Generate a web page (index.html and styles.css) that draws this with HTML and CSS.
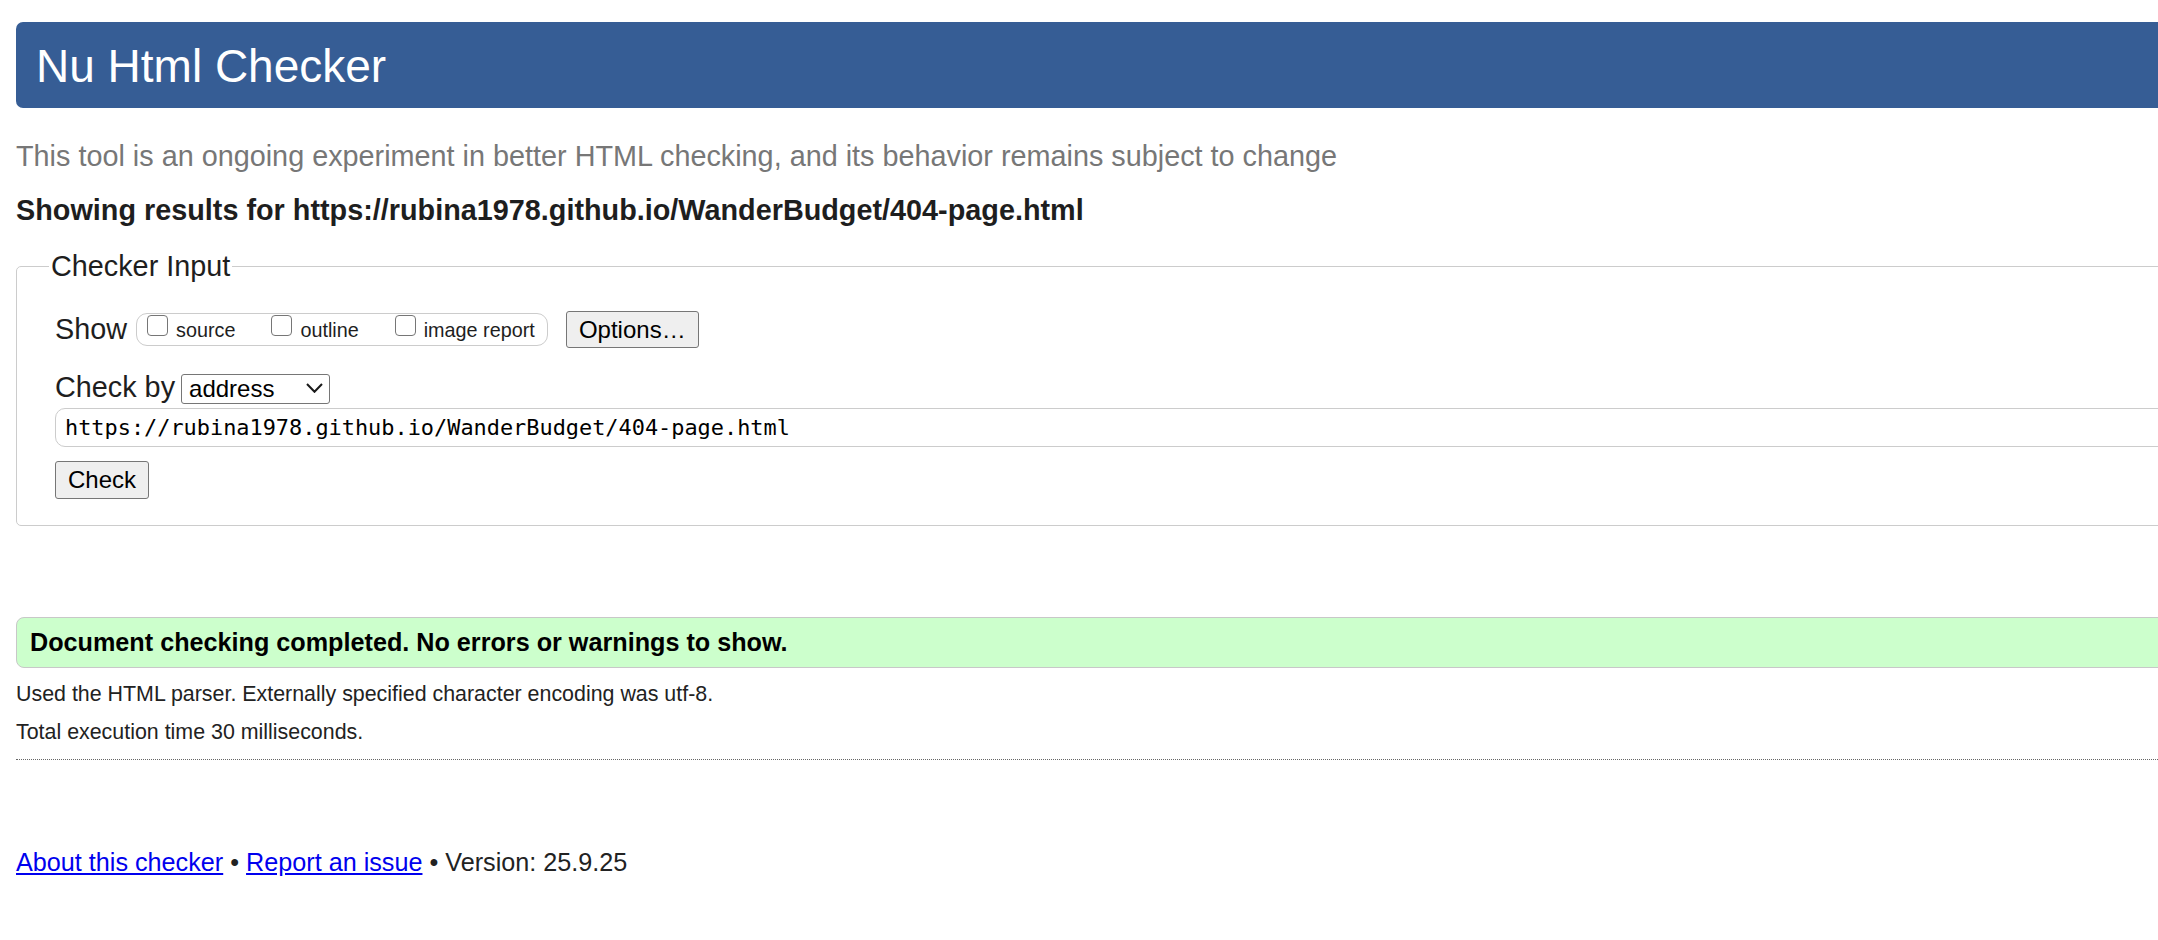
FILE: index.html
```html
<!DOCTYPE html>
<html lang="en">
<head>
<meta charset="utf-8">
<title>Nu Html Checker</title>
<link rel="stylesheet" href="styles.css">
</head>
<body>
<div class="page">
  <header class="banner"><h1 class="banner-title">Nu Html Checker</h1></header>
  <p class="tagline">This tool is an ongoing experiment in better HTML checking, and its behavior remains subject to change</p>
  <h2 class="results-for">Showing results for https://rubina1978.github.io/WanderBudget/404-page.html</h2>
  <form class="checker-form">
    <fieldset class="checker-input">
      <legend class="checker-legend">Checker Input</legend>
      <div class="show-row">
        <span class="row-label">Show</span>
        <span class="opts">
          <label class="opt"><input class="opt-box" type="checkbox"><span class="opt-text">source</span></label>
          <label class="opt"><input class="opt-box" type="checkbox"><span class="opt-text">outline</span></label>
          <label class="opt"><input class="opt-box" type="checkbox"><span class="opt-text">image report</span></label>
        </span>
        <button type="button" class="btn btn-options">Options…</button>
      </div>
      <div class="by-row">
        <span class="row-label">Check by</span>
        <span class="select-wrap">
          <select class="by-select"><option>address</option></select>
          <svg class="chev" width="17" height="10" viewBox="0 0 17 10"><path d="M1 1 L8.5 8.8 L16 1" fill="none" stroke="#1a1a1a" stroke-width="2"/></svg>
        </span>
      </div>
      <input class="url" type="text" value="https://rubina1978.github.io/WanderBudget/404-page.html">
      <button type="button" class="btn btn-check">Check</button>
    </fieldset>
  </form>
  <p class="success">Document checking completed. No errors or warnings to show.</p>
  <p class="meta meta-first">Used the HTML parser. Externally specified character encoding was utf-8.</p>
  <p class="meta meta-second">Total execution time 30 milliseconds.</p>
  <hr class="sep">
  <p class="footer"><a class="footer-link" href="#">About this checker</a> • <a class="footer-link" href="#">Report an issue</a> • Version: 25.9.25</p>
</div>
</body>
</html>
```
FILE: styles.css
```css
html {
  overflow: hidden;
}
body {
  margin: 0;
  background: #fff;
  color: #222;
  font-family: "Liberation Sans", Arial, sans-serif;
}
.page {
  width: 2200px;
  padding: 22px 0 0 16px;
}
.banner {
  height: 86px;
  background: #365d95;
  border-radius: 7px;
  padding-left: 20px;
}
.banner-title {
  margin: 0;
  font-size: 46px;
  font-weight: normal;
  line-height: 88px;
  color: #fff;
}
.tagline {
  margin: 32px 0 0;
  font-size: 28.8px;
  color: #777;
}
.results-for {
  margin: 21px 0 0;
  font-size: 28.8px;
  font-weight: bold;
  color: #1e1e1e;
}
.checker-form {
  margin: 23px 0 0;
}
.checker-input {
  margin: 0;
  border: 1px solid #ccc;
  border-radius: 5px;
  padding: 0 0 26px 38px;
  min-width: 0;
}
.checker-legend {
  font-size: 28.8px;
  padding: 0 2px;
  margin-left: -6px;
  color: #1e1e1e;
}
.show-row {
  display: flex;
  align-items: center;
  margin-top: 28px;
  height: 37px;
}
.row-label {
  font-size: 28.8px;
  color: #1e1e1e;
}
.opts {
  display: flex;
  align-items: flex-start;
  gap: 36px;
  height: 31px;
  margin-left: 9px;
  padding: 0 12px 0 10px;
  border: 1px solid #ccc;
  border-radius: 11px;
}
.opt {
  display: flex;
  align-items: flex-start;
  font-size: 19.8px;
  color: #1e1e1e;
}
.opt-box {
  appearance: none;
  -webkit-appearance: none;
  width: 21px;
  height: 21px;
  margin: 1px 0 0;
  border: 1.6px solid #767676;
  border-radius: 4px;
  background: #fff;
}
.opt-text {
  margin-left: 8px;
  padding-top: 5px;
}
.btn {
  font-family: "Liberation Sans", Arial, sans-serif;
  font-size: 24px;
  color: #000;
  background: #efefef;
  border: 1px solid #767676;
  border-radius: 3px;
  padding: 0;
}
.btn-options {
  width: 133px;
  height: 37px;
  margin-left: 18px;
}
.by-row {
  display: flex;
  align-items: baseline;
  margin-top: 23px;
}
.select-wrap {
  position: relative;
  margin-left: 6px;
}
.by-select {
  appearance: none;
  -webkit-appearance: none;
  width: 149px;
  height: 30px;
  padding: 0 0 0 7px;
  border: 1px solid #767676;
  border-radius: 3px;
  background: #fff;
  color: #000;
  font-family: "Liberation Sans", Arial, sans-serif;
  font-size: 24px;
}
.chev {
  position: absolute;
  right: 7px;
  top: 50%;
  margin-top: -6px;
  pointer-events: none;
}
.url {
  display: block;
  box-sizing: border-box;
  width: 100%;
  height: 38.5px;
  margin: 4px 0 0;
  padding: 0 0 0 9px;
  border: 1px solid #ccc;
  border-radius: 10px;
  font-family: "DejaVu Sans Mono", "Liberation Mono", monospace;
  font-size: 21.9px;
  color: #000;
  background: #fff;
}
.btn-check {
  display: block;
  width: 94px;
  height: 38px;
  margin-top: 14.5px;
}
.success {
  margin: 91px 0 0;
  padding: 10px 12px 10px 13px;
  background: #ccffcc;
  border: 1px solid #c8c8c8;
  border-radius: 8px;
  font-size: 25.2px;
  font-weight: bold;
  color: #000;
}
.meta {
  margin: 0;
  font-size: 21.4px;
  color: #222;
}
.meta-first {
  margin-top: 14px;
}
.meta-second {
  margin-top: 13px;
}
.sep {
  margin: 13.5px 0 0;
  height: 0;
  border: 0;
  border-top: 1px dotted #666;
}
.footer {
  margin: 88.5px 0 0;
  font-size: 25.2px;
  color: #222;
}
.footer-link {
  color: #0000ee;
}
```
